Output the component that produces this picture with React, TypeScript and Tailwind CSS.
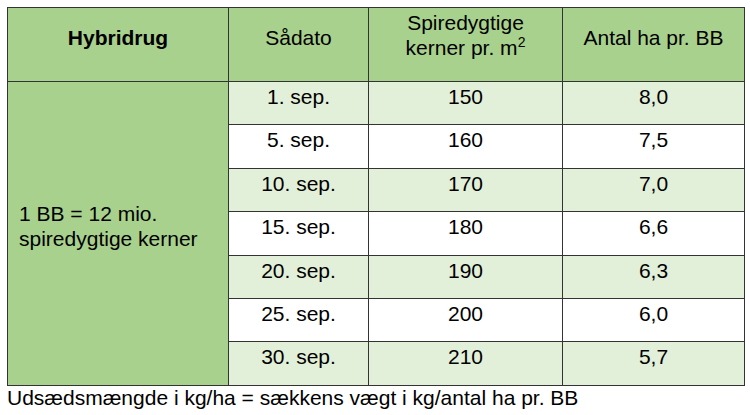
import React from "react";

const rows = [
  ["1. sep.", "150", "8,0"],
  ["5. sep.", "160", "7,5"],
  ["10. sep.", "170", "7,0"],
  ["15. sep.", "180", "6,6"],
  ["20. sep.", "190", "6,3"],
  ["25. sep.", "200", "6,0"],
  ["30. sep.", "210", "5,7"],
];

export default function App() {
  return (
    <div
      className="w-[750px] h-[415px] bg-white text-black"
      style={{ fontFamily: '"Liberation Sans", Arial, sans-serif' }}
    >
      <div className="pl-[7px] pt-[7px]">
        <table className="border-collapse w-[737px] table-fixed text-[21px] leading-[25px]">
          <colgroup>
            <col className="w-[221px]" />
            <col className="w-[140px]" />
            <col className="w-[194px]" />
            <col className="w-[182px]" />
          </colgroup>
          <thead>
            <tr className="h-[74px] bg-[#a9d18e]">
              <th className="border border-[#333333] font-bold text-center align-middle pb-[14px]">Hybridrug</th>
              <th className="border border-[#333333] font-normal text-center align-middle pb-[14px]">Sådato</th>
              <th className="border border-[#333333] font-normal text-center align-middle pb-[20px]">
                Spiredygtige
                <br />
                kerner pr. m<sup className="text-[14px] relative -top-[8px]">2</sup>
              </th>
              <th className="border border-[#333333] font-normal text-center align-middle pb-[14px]">Antal ha pr. BB</th>
            </tr>
          </thead>
          <tbody>
            {rows.map((r, i) => (
              <tr key={i} className={(i % 2 === 0 ? "bg-[#e2efd9] " : "bg-white ") + (i === 6 || i === 3 || i === 1 ? "h-[44px]" : "h-[43px]")}>
                {i === 0 && (
                  <td rowSpan={7} className="border border-[#333333] bg-[#a9d18e] align-middle pl-[11px] pb-[16px]">
                    1 BB = 12 mio.
                    <br />
                    spiredygtige kerner
                  </td>
                )}
                <td className="border border-[#333333] text-center align-top pt-[2px]">{r[0]}</td>
                <td className="border border-[#333333] text-center align-top pt-[2px]">{r[1]}</td>
                <td className="border border-[#333333] text-center align-top pt-[2px]">{r[2]}</td>
              </tr>
            ))}
          </tbody>
        </table>
        <div className="text-[21px] leading-[24px]">
          Udsædsmængde i kg/ha = sækkens vægt i kg/antal ha pr. BB
        </div>
      </div>
    </div>
  );
}
